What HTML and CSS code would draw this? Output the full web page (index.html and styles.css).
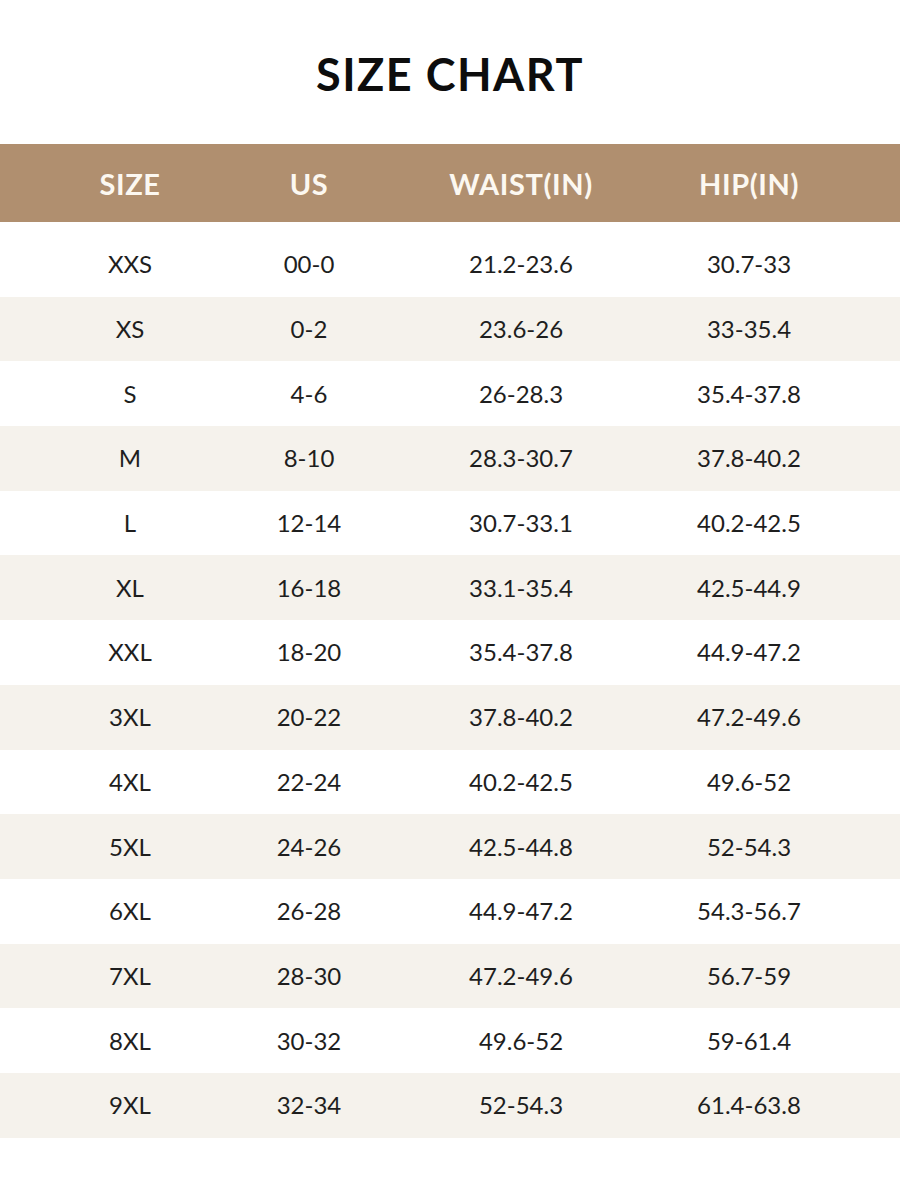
FILE: index.html
```html
<!DOCTYPE html>
<html lang="en">
<head>
<meta charset="utf-8">
<title>Size Chart</title>
<link rel="stylesheet" href="styles.css">
</head>
<body>
<main class="chart">
  <h1 class="title">SIZE CHART</h1>
  <div class="table">
    <div class="row head">
      <div>SIZE</div><div>US</div><div>WAIST(IN)</div><div>HIP(IN)</div>
    </div>
    <div class="body">
      <div class="row"><div>XXS</div><div>00-0</div><div>21.2-23.6</div><div>30.7-33</div></div>
      <div class="row"><div>XS</div><div>0-2</div><div>23.6-26</div><div>33-35.4</div></div>
      <div class="row"><div>S</div><div>4-6</div><div>26-28.3</div><div>35.4-37.8</div></div>
      <div class="row"><div>M</div><div>8-10</div><div>28.3-30.7</div><div>37.8-40.2</div></div>
      <div class="row"><div>L</div><div>12-14</div><div>30.7-33.1</div><div>40.2-42.5</div></div>
      <div class="row"><div>XL</div><div>16-18</div><div>33.1-35.4</div><div>42.5-44.9</div></div>
      <div class="row"><div>XXL</div><div>18-20</div><div>35.4-37.8</div><div>44.9-47.2</div></div>
      <div class="row"><div>3XL</div><div>20-22</div><div>37.8-40.2</div><div>47.2-49.6</div></div>
      <div class="row"><div>4XL</div><div>22-24</div><div>40.2-42.5</div><div>49.6-52</div></div>
      <div class="row"><div>5XL</div><div>24-26</div><div>42.5-44.8</div><div>52-54.3</div></div>
      <div class="row"><div>6XL</div><div>26-28</div><div>44.9-47.2</div><div>54.3-56.7</div></div>
      <div class="row"><div>7XL</div><div>28-30</div><div>47.2-49.6</div><div>56.7-59</div></div>
      <div class="row"><div>8XL</div><div>30-32</div><div>49.6-52</div><div>59-61.4</div></div>
      <div class="row"><div>9XL</div><div>32-34</div><div>52-54.3</div><div>61.4-63.8</div></div>
    </div>
  </div>
</main>
</body>
</html>
```
FILE: styles.css
```css
html, body {
  margin: 0;
  padding: 0;
  background: #ffffff;
}
body {
  font-family: Lato, "Open Sans", Arial, sans-serif;
  color: #1e1e1e;
}
.chart {
  width: 900px;
  height: 1200px;
  overflow: hidden;
}
.title {
  margin: 0;
  height: 144px;
  display: flex;
  align-items: center;
  justify-content: center;
  box-sizing: border-box;
  font-size: 45px;
  font-weight: 700;
  letter-spacing: 1.5px;
  color: #0d0d0d;
  line-height: 1;
  padding-top: 4px;
}
.row {
  display: grid;
  grid-template-columns: 180px 178px 246px 210px;
  padding-left: 40px;
  height: 64.7px;
  align-items: center;
  justify-items: center;
  font-size: 24px;
  padding-bottom: 1px;
  box-sizing: border-box;
}
.head {
  height: 78px;
  background: #b08f6f;
  color: #fcf8f1;
  font-size: 29px;
  font-weight: 700;
  letter-spacing: 0.6px;
  padding-bottom: 0;
}
.body {
  padding-top: 10px;
}
.body .row:nth-child(even) {
  background: #f5f2ec;
}
```
